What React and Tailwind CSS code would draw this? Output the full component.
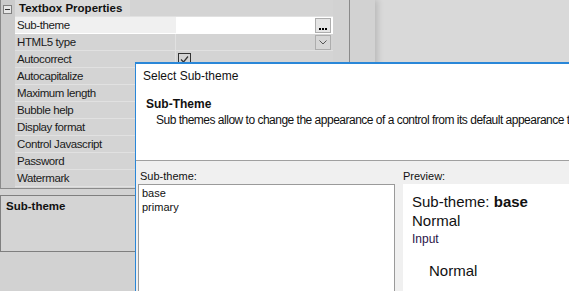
import React from 'react';

const rows = [
  'HTML5 type',
  'Autocorrect',
  'Autocapitalize',
  'Maximum length',
  'Bubble help',
  'Display format',
  'Control Javascript',
  'Password',
  'Watermark',
];

const PropRow = ({ label, children }) => (
  <div className="flex h-[17px] border-b border-[#e1e1e1]">
    <div className="w-[161px] shrink-0 border-r border-[#e1e1e1] pl-[2px] text-[11.5px] leading-[17px] tracking-[-0.4px] text-[#1a1a1a]">
      {label}
    </div>
    <div className="relative flex-1">{children}</div>
  </div>
);

const App = () => {
  return (
    <div className="relative h-[291px] w-[569px] overflow-hidden bg-[#d9d9d9] font-['Liberation_Sans',Arial,sans-serif]">
      <div className="relative z-0 flex h-full w-[375px] flex-col bg-[#d2d2d2] shadow-[3px_0_6px_rgba(0,0,0,0.14)]">
        {/* property grid */}
        <div className="flex h-[189px] w-[350px] border-b border-l border-r border-[#8a8a8a]">
          <div className="w-[14px] shrink-0 bg-[#cbcbcb] pl-[2px] pt-[5px]">
            <div className="flex h-[9px] w-[9px] items-center justify-center border border-[#808080] bg-[#e6e6e6]">
              <div className="h-px w-[5px] bg-[#333]" />
            </div>
          </div>
          <div className="flex w-[318px] flex-col bg-[#d4d4d4]">
            <div className="flex h-[17px] border-b border-[#e1e1e1]">
              <div className="bg-[#dadada] pl-[4px] pr-[8px] text-[11.5px] font-bold leading-[16px] text-[#111]">
                Textbox Properties
              </div>
            </div>
            <div className="flex h-[17px] border-b border-white">
              <div className="w-[161px] shrink-0 bg-[#f0f0f0] pl-[2px] text-[11.5px] leading-[16px] tracking-[-0.4px] text-[#1a1a1a]">
                Sub-theme
              </div>
              <div className="flex flex-1 items-center justify-end bg-white pr-[2px]">
                <div className="flex h-[15px] w-[16px] items-end justify-center border border-[#adadad] bg-[#e5e5e5] pb-[2px]">
                  <div className="flex gap-[1px]">
                    <div className="h-[2px] w-[2px] bg-black" />
                    <div className="h-[2px] w-[2px] bg-black" />
                    <div className="h-[2px] w-[2px] bg-black" />
                  </div>
                </div>
              </div>
            </div>
            {rows.map((r) => (
              <PropRow key={r} label={r}>
                {r === 'HTML5 type' && (
                  <div className="absolute right-[2px] top-[1px] flex h-[15px] w-[16px] items-center justify-center border border-[#adadad] bg-[#d6d6d6]">
                    <svg width="8" height="5" viewBox="0 0 8 5">
                      <path d="M0.5 0.5 L4 4 L7.5 0.5" fill="none" stroke="#555" strokeWidth="1" />
                    </svg>
                  </div>
                )}
                {r === 'Autocorrect' && (
                  <div className="absolute left-[2px] top-[2px] flex h-[13px] w-[13px] items-center justify-center border border-[#333] bg-[#d4d4d4]">
                    <svg width="9" height="9" viewBox="0 0 9 9">
                      <path d="M1 4.5 L3.5 7 L8 1.5" fill="none" stroke="#333" strokeWidth="1.2" />
                    </svg>
                  </div>
                )}
              </PropRow>
            ))}
          </div>
          <div className="flex-1 bg-[#d2d2d2]" />
        </div>

        {/* description panel */}
        <div className="mt-[6px] h-[57px] w-[350px] border border-[#7f7f7f] bg-[#d4d4d4] pl-[5px] pt-[3px]">
          <div className="text-[11.5px] font-bold leading-[14px] text-[#111]">Sub-theme</div>
        </div>
      </div>

      {/* dialog */}
      <div className="absolute left-[135px] top-[62px] z-10 flex h-[250px] w-[460px] flex-col border-l border-t-2 border-[#2a87d8] bg-white text-[#111]">
        <div className="h-[26px] pl-[7px] pt-[5px] text-[12px] leading-[14px]">Select Sub-theme</div>
        <div className="h-[70px] pl-[10px] pt-[7px]">
          <div className="text-[12px] font-bold leading-[14px]">Sub-Theme</div>
          <div className="mt-[2px] whitespace-nowrap pl-[10px] text-[12px] leading-[14px] tracking-[-0.5px]">
            Sub themes allow to change the appearance of a control from its default appearance to another
          </div>
        </div>
        <div className="h-px bg-[#a0a0a0]" />
        <div className="flex flex-1 gap-[8px] bg-[#f0f0f0] pl-[2px] pt-[8px]">
          <div className="flex w-[257px] shrink-0 flex-col">
            <div className="pl-[2px] text-[11px] leading-[14px]">Sub-theme:</div>
            <div className="mt-[1px] flex-1 border border-[#9a9a9a] bg-white pl-[3px] pt-[1px] text-[11px] leading-[14px]">
              <div>base</div>
              <div>primary</div>
            </div>
          </div>
          <div className="flex flex-1 flex-col">
            <div className="text-[11px] leading-[14px]">Preview:</div>
            <div className="mt-[1px] flex-1 bg-white pl-[9px] pt-[8px] text-[#111]">
              <div className="text-[15px] leading-[20px]">
                Sub-theme: <span className="font-bold">base</span>
              </div>
              <div className="text-[15px] leading-[18px]">Normal</div>
              <div className="mt-[2px] text-[12px] leading-[14px] text-[#2a1548]">Input</div>
              <div className="mt-[16px] pl-[17px] text-[15px] leading-[18px]">Normal</div>
            </div>
          </div>
        </div>
      </div>
    </div>
  );
};

export default App;
